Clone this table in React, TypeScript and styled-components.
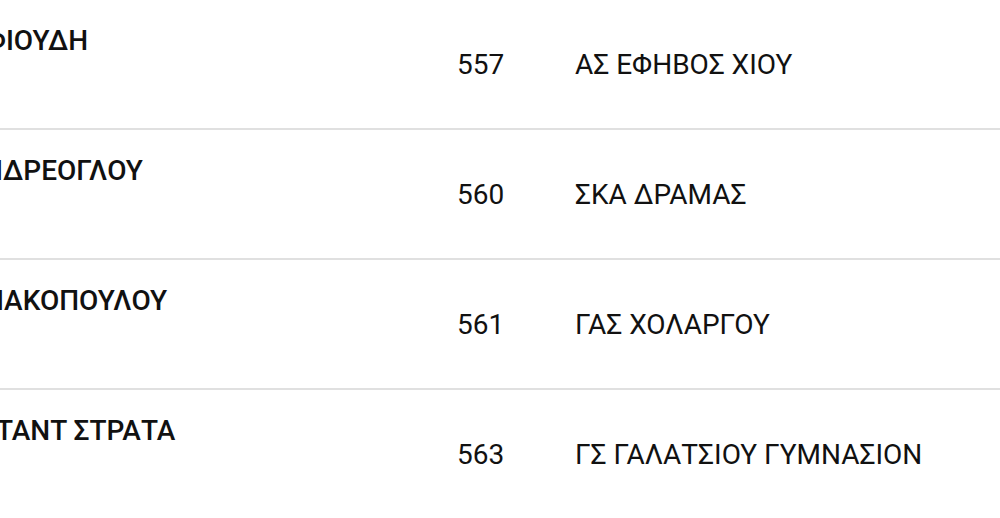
import React from "react";
import styled, { createGlobalStyle } from "styled-components";

const GlobalStyle = createGlobalStyle`
  body {
    margin: 0;
    background: #ffffff;
    font-family: Roboto, "Noto Sans", sans-serif;
  }
`;

interface Entry {
  name: string;
  // how far the first letter sits past the left edge (list is scrolled)
  cut: number;
  code: string;
  club: string;
}

const entries: Entry[] = [
  { name: "ΦΙΟΥΔΗ", cut: 15, code: "557", club: "ΑΣ ΕΦΗΒΟΣ ΧΙΟΥ" },
  { name: "ΝΔΡΕΟΓΛΟΥ", cut: 17, code: "560", club: "ΣΚΑ ΔΡΑΜΑΣ" },
  { name: "ΝΑΚΟΠΟΥΛΟΥ", cut: 16, code: "561", club: "ΓΑΣ ΧΟΛΑΡΓΟΥ" },
  { name: "ΤΑΝΤ ΣΤΡΑΤΑ", cut: 4, code: "563", club: "ΓΣ ΓΑΛΑΤΣΙΟΥ ΓΥΜΝΑΣΙΟΝ" },
];

const Table = styled.div`
  width: 100%;
  overflow: hidden;
  color: #111111;
`;

const Row = styled.div`
  display: grid;
  grid-template-columns: 457px 118px 1fr;
  height: 130px;
  box-sizing: border-box;
  border-bottom: 2px solid #e0e0e0;
`;

const NameCell = styled.div`
  align-self: start;
  padding-top: 24px;
  overflow: hidden;
  white-space: nowrap;
`;

const Name = styled.span<{ $cut: number }>`
  display: inline-block;
  margin-left: ${(p) => -p.$cut}px;
  font-size: 28px;
  font-weight: 500;
`;

const Cell = styled.div`
  align-self: center;
  font-size: 28px;
  white-space: nowrap;
`;

export default function App() {
  return (
    <>
      <GlobalStyle />
      <Table>
        {entries.map((e) => (
          <Row key={e.code}>
            <NameCell>
              <Name $cut={e.cut}>{e.name}</Name>
            </NameCell>
            <Cell>{e.code}</Cell>
            <Cell>{e.club}</Cell>
          </Row>
        ))}
      </Table>
    </>
  );
}
